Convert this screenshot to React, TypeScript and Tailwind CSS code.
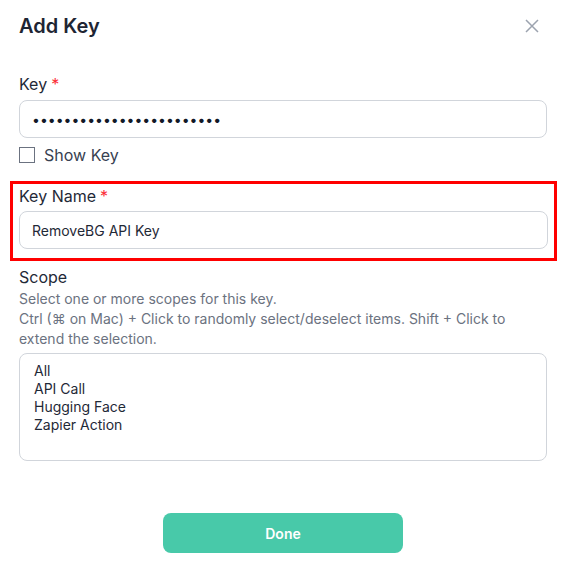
import React from "react";

const Required = () => <span className="ml-1 text-red-500">*</span>;

const App = () => {
  return (
    <div className="w-[568px] h-[570px] bg-white font-['Inter',sans-serif] text-[#1f2937]">
      <div className="pl-[19px] pr-[21px] pt-[13px]">
        {/* header */}
        <div className="flex items-center justify-between h-[26px]">
          <h2 className="text-[20px] font-semibold text-[#1e2533]">Add Key</h2>
          <button className="mr-[8px] text-[#9ca3af]">
            <svg width="14" height="14" viewBox="0 0 14 14" fill="none" stroke="currentColor" strokeWidth="1.5">
              <path d="M1 1L13 13M13 1L1 13" />
            </svg>
          </button>
        </div>

        {/* key */}
        <div className="mt-[33px]">
          <label className="block text-[16px] leading-[24px] text-[#1f2937]">
            Key<Required />
          </label>
          <div className="mt-[4px] h-[38px] rounded-lg border border-[#d1d5db] px-[12px] flex items-center text-[14px] text-[#111827]">
            ••••••••••••••••••••••••
          </div>
          <label className="mt-[7px] flex items-center gap-[9px] text-[16px] leading-[20px] text-[#374151]">
            <span className="w-[16px] h-[16px] border border-[#6b7280] bg-white" />
            Show Key
          </label>
        </div>

        {/* key name */}
        <div className="-ml-[9px] -mr-[10px] mt-[16px] border-[3px] border-[#ff0000] px-[6px] pb-[9px]">
          <label className="block text-[16px] leading-[24px] text-[#1f2937]">
            Key Name<Required />
          </label>
          <div className="mt-[3px] h-[38px] rounded-lg border border-[#d1d5db] px-[12px] flex items-center text-[14px] text-[#1f2937]">
            RemoveBG API Key
          </div>
        </div>

        {/* scope */}
        <div className="mt-[4px]">
          <label className="block text-[16px] leading-[24px] text-[#1f2937]">Scope</label>
          <p className="text-[14px] leading-[20px] text-[#6b7280]">
            Select one or more scopes for this key.
            <br />
            Ctrl (⌘ on Mac) + Click to randomly select/deselect items. Shift + Click to extend the selection.
          </p>
          <div className="mt-[4px] h-[108px] rounded-lg border border-[#d1d5db] px-[14px] pt-[8px] text-[14px] leading-[18px] text-[#1f2937]">
            <div>All</div>
            <div>API Call</div>
            <div>Hugging Face</div>
            <div>Zapier Action</div>
          </div>
        </div>

        {/* footer */}
        <div className="mt-[52px] flex justify-center">
          <button className="w-[240px] h-[40px] rounded-lg bg-[#48c9a9] text-white text-[14px] font-semibold">
            Done
          </button>
        </div>
      </div>
    </div>
  );
};

export default App;
